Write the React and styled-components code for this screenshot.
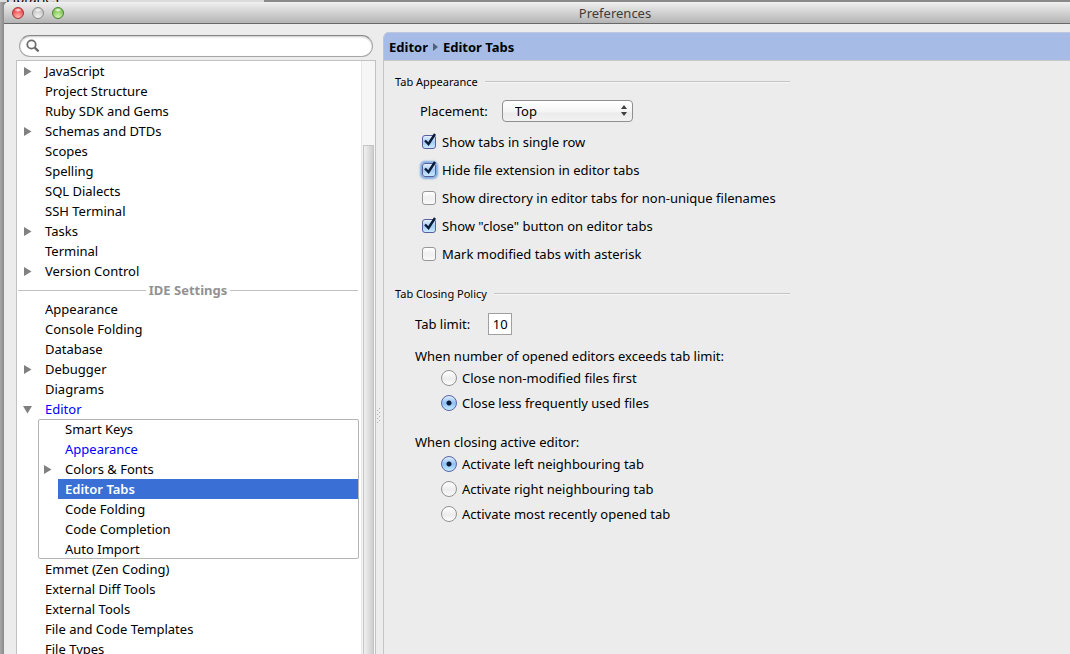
import React from "react";
import styled, { createGlobalStyle, css } from "styled-components";

const GlobalStyle = createGlobalStyle`
  * { box-sizing: border-box; }
  body {
    margin: 0;
    background: #a9a9a9;
    font-family: "Noto Sans", "Open Sans", sans-serif;
    font-size: 13px;
    line-height: 20px;
    color: #000;
  }
  input, select, button { font: inherit; color: inherit; margin: 0; padding: 0; }
`;

const Desktop = styled.div`
  height: 100vh;
  display: flex;
  flex-direction: column;
  overflow: hidden;
  background: linear-gradient(to right, #a8a8a8, #8a8a8a 4px);
`;

const BackWindow = styled.div`
  flex: none;
  display: flex;
  align-items: flex-end;
  width: 265px;
  height: 2px;
  padding-left: 6px;
  background: #dcdcdc;
  border-right: 1px solid #888;
  line-height: 8px;
  overflow: hidden;
`;

const Window = styled.main`
  flex: 1;
  min-height: 0;
  margin-left: 4px;
  display: flex;
  flex-direction: column;
  background: #ececec;
  border-top-left-radius: 5px;
  overflow: hidden;
`;

const TitleBar = styled.header`
  flex: none;
  height: 22px;
  display: grid;
  grid-template-columns: 252px 1fr 96px;
  align-items: center;
  background: linear-gradient(#f0f0f0, #d8d8d8 40%, #b4b4b4);
  border-bottom: 1px solid #686868;
`;

const Lights = styled.div`
  display: flex;
  gap: 8px;
  padding-left: 8px;
`;

const tones = {
  red: ["#ffb9b4", "#ee4a4c", "#a33432"],
  grey: ["#f4f4f4", "#c6c6c6", "#8c8c8c"],
  green: ["#d6f5b4", "#7dc552", "#4b8233"],
};

const Light = styled.button`
  width: 12px;
  height: 12px;
  border-radius: 50%;
  border: 1px solid ${(p) => tones[p.$tone][2]};
  background:
    radial-gradient(ellipse 4px 2px at 50% 20%, #fff, transparent),
    radial-gradient(circle at 50% 90%, ${(p) => tones[p.$tone][0]}, ${(p) => tones[p.$tone][1]} 70%);
`;

const Title = styled.h1`
  margin: 0;
  font-size: 13px;
  line-height: 20px;
  font-weight: 400;
  text-align: center;
  color: #3c3c3c;
`;

const Columns = styled.div`
  flex: 1;
  min-height: 0;
  display: flex;
`;

const Sidebar = styled.aside`
  flex: 0 0 360px;
  margin-left: 12px;
  padding-top: 11px;
  display: flex;
  flex-direction: column;
  gap: 3px;
`;

const SearchBox = styled.label`
  flex: none;
  display: flex;
  align-items: center;
  gap: 4px;
  height: 22px;
  margin: 0 3px;
  padding: 0 6px;
  border: 1px solid #a6a6a6;
  border-top-color: #858585;
  border-radius: 11px;
  background: #fff;
  box-shadow: inset 0 1px 2px #c8c8c8;
`;

const SearchInput = styled.input`
  flex: 1;
  min-width: 0;
  border: 0;
  outline: 0;
  background: transparent;
`;

const TreeFrame = styled.div`
  flex: 1;
  min-height: 0;
  display: flex;
  background: #fff;
  border: 1px solid #c2c2c2;
  border-bottom: 0;
`;

const Tree = styled.nav`
  flex: 1;
  min-width: 0;
  padding-right: 2px;
  overflow: hidden;
`;

const Track = styled.div`
  flex: none;
  width: 14px;
  padding: 84px 1px 0 1px;
  background: #f6f6f6;
  border-left: 1px solid #e6e6e6;
  display: flex;
`;

const Thumb = styled.div`
  flex: 1;
  border: 1px solid #c4c4c4;
  border-bottom: 0;
  background: linear-gradient(to right, #f0f0f0, #cecece);
`;

const Row = styled.a`
  display: flex;
  align-items: center;
  height: 20px;
  padding-left: 6px;
  color: ${(p) => (p.$changed ? "#00f" : "#000")};
  text-decoration: none;
  white-space: nowrap;
  ${(p) =>
    p.$selected &&
    css`
      margin-left: 19px;
      padding-left: 7px;
      background: #3a70d6;
      color: #fff;
      font-weight: 600;
    `}
`;

const Arrow = styled.svg`
  flex: none;
  width: 9px;
  height: 9px;
  margin-right: 13px;
  fill: #808080;
`;

const ArrowSpace = styled.span`
  flex: none;
  width: 22px;
`;

const Group = styled.div`
  margin: 0 0 0 21px;
  border: 1px solid #b4b4b4;
  border-radius: 2px;
  & > a:first-child { margin-top: -1px; }
  & > a:last-child { margin-bottom: -1px; }
`;

const SubRow = styled(Row)`
  padding-left: ${(p) => (p.$selected ? 7 : 4)}px;
`;

const Divider = styled.h2`
  display: flex;
  align-items: center;
  gap: 3px;
  height: 18px;
  margin: 0 1px;
  font-size: 13px;
  line-height: 18px;
  font-weight: 700;
  color: #929292;
  &::before, &::after { content: ""; flex: 1; border-top: 1px solid #c0c0c0; }
`;

const Splitter = styled.div`
  flex: 0 0 7px;
  display: flex;
  align-items: center;
  justify-content: flex-start;
  padding: 154px 0 0 1px;
`;

const Panel = styled.section`
  flex: 1;
  min-width: 0;
  margin-top: 8px;
  border-left: 1px solid #c4c4c4;
  border-top-left-radius: 6px;
  overflow: hidden;
`;

const Crumbs = styled.h2`
  display: flex;
  align-items: center;
  gap: 5px;
  height: 29px;
  margin: 0;
  padding-left: 5px;
  background: #a6bce6;
  border-top: 1px solid #bcc8e0;
  border-bottom: 1px solid #c8c8c8;
  font-size: 13px;
  line-height: 20px;
  font-weight: 700;
`;

const Form = styled.form`
  width: 406px;
  max-width: 100%;
  padding: 12px 0 0 11px;
`;

const Section = styled.fieldset`
  min-width: 0;
  margin: 0 0 17px;
  padding: 0;
  border: 0;
`;

const Legend = styled.legend`
  display: flex;
  align-items: center;
  gap: 7px;
  width: 100%;
  height: 18px;
  padding: 0;
  font-size: 11px;
  line-height: 18px;
  &::after { content: ""; flex: 1; border-top: 1px solid #c4c4c4; border-bottom: 1px solid #f6f6f6; }
`;

const Field = styled.label`
  display: flex;
  align-items: center;
  gap: ${(p) => (p.$narrow ? 18 : 14)}px;
  height: 22px;
  margin: ${(p) => (p.$narrow ? "10px 0 12px 20px" : "9px 0 6px 25px")};
`;

const SelectWrap = styled.span`
  position: relative;
  display: flex;
  width: 131px;
`;

const Select = styled.select`
  appearance: none;
  width: 100%;
  height: 22px;
  padding: 0 20px 2px 12px;
  border: 1px solid #8f8f8f;
  border-radius: 4px;
  background: linear-gradient(#fff, #f4f4f4 55%, #ebebeb 60%, #f2f2f2);
`;

const SelectArrows = styled.svg`
  position: absolute;
  right: 6px;
  top: 5px;
  fill: #404040;
  pointer-events: none;
`;

const LimitInput = styled.input`
  width: 24px;
  height: 22px;
  border: 1px solid #a0a0a0;
  border-radius: 0;
  background: #fff;
  text-align: center;
`;

const Option = styled.label`
  display: flex;
  align-items: center;
  gap: ${(p) => (p.$radio ? 5 : 6)}px;
  height: ${(p) => (p.$radio ? 25 : 28)}px;
  padding-left: ${(p) => (p.$radio ? 46 : 27)}px;
  white-space: nowrap;
`;

const Mark = styled.span`
  position: relative;
  flex: none;
  display: flex;
`;

const Check = styled.input`
  appearance: none;
  width: 14px;
  height: 14px;
  border: 1px solid #979797;
  border-radius: 3px;
  outline: 0;
  background: linear-gradient(#fff, #f0f0f0 50%, #fafafa);
  &:checked {
    border-color: #5a5f9c;
    background: linear-gradient(#e6f0fc, #a3ccf5 50%, #c9eaff);
  }
  ${(p) => p.$glow && css`box-shadow: 0 0 2px 2px #7eabdf;`}
`;

const Tick = styled.svg`
  position: absolute;
  left: 1px;
  top: -2px;
  fill: none;
  stroke: #0b1c38;
  stroke-width: 2.4;
  pointer-events: none;
`;

const Radio = styled.input`
  appearance: none;
  width: 16px;
  height: 16px;
  border: 1px solid #929292;
  border-radius: 50%;
  background: linear-gradient(#fff, #ececec 55%, #fdfdfd);
  &:checked {
    border-color: #5a66a6;
    background:
      radial-gradient(circle at 50% 50%, #0b1c38 2px, transparent 3px),
      linear-gradient(#e0edfc, #8fc1f5 50%, #c4ebff);
  }
`;

const Question = styled.p`
  margin: ${(p) => (p.$spaced ? "18px 0 0 20px" : "0 0 0 20px")};
  line-height: 18px;
`;

function TreeRow({ label, open, branch, sub, ...rest }) {
  const Item = sub ? SubRow : Row;
  return (
    <Item href="#" {...rest}>
      {branch ? (
        <Arrow viewBox="0 0 9 9" aria-hidden="true">
          <path d={open ? "M0 1H9L4.5 8.5Z" : "M1 0L8.5 4.5L1 9Z"} />
        </Arrow>
      ) : (
        !rest.$selected && <ArrowSpace />
      )}
      {label}
    </Item>
  );
}

function CheckOption({ label, checked, focused }) {
  return (
    <Option>
      <Mark>
        <Check type="checkbox" defaultChecked={checked} $glow={focused} />
        {checked && (
          <Tick width="14" height="14" viewBox="0 0 14 14" aria-hidden="true">
            <path d="M2 7.5L5.5 11L12 1" />
          </Tick>
        )}
      </Mark>
      {label}
    </Option>
  );
}

function RadioOption({ label, name, checked }) {
  return (
    <Option $radio>
      <Radio type="radio" name={name} defaultChecked={checked} />
      {label}
    </Option>
  );
}

const projectRows = [
  ["JavaScript", true], ["Project Structure"], ["Ruby SDK and Gems"],
  ["Schemas and DTDs", true], ["Scopes"], ["Spelling"], ["SQL Dialects"],
  ["SSH Terminal"], ["Tasks", true], ["Terminal"], ["Version Control", true],
];
const ideRows = [["Appearance"], ["Console Folding"], ["Database"], ["Debugger", true], ["Diagrams"]];
const toolRows = ["Emmet (Zen Coding)", "External Diff Tools", "External Tools", "File and Code Templates", "File Types"];

const gripDots = [0, 1, 2, 3, 4, 5, 6, 7];

export default function App() {
  return (
    <>
      <GlobalStyle />
      <Desktop>
        <BackWindow>Libraries</BackWindow>
        <Window>
          <TitleBar>
            <Lights>
              <Light type="button" aria-label="Close" $tone="red" />
              <Light type="button" aria-label="Minimize" $tone="grey" />
              <Light type="button" aria-label="Zoom" $tone="green" />
            </Lights>
            <Title>Preferences</Title>
          </TitleBar>
          <Columns>
            <Sidebar>
              <SearchBox>
                <svg width="14" height="14" viewBox="0 0 14 14" fill="none" stroke="#6c6c6c" aria-hidden="true">
                  <circle cx="5.5" cy="5.5" r="4.2" strokeWidth="1.8" />
                  <path d="M8.7 8.7L12.6 12.4" strokeWidth="2.3" />
                </svg>
                <SearchInput type="search" aria-label="Search settings" />
              </SearchBox>
              <TreeFrame>
                <Tree aria-label="Settings">
                  {projectRows.map(([label, branch]) => (
                    <TreeRow key={label} label={label} branch={branch} />
                  ))}
                  <Divider>IDE Settings</Divider>
                  {ideRows.map(([label, branch]) => (
                    <TreeRow key={label} label={label} branch={branch} />
                  ))}
                  <TreeRow label="Editor" branch open $changed />
                  <Group>
                    <TreeRow sub label="Smart Keys" />
                    <TreeRow sub label="Appearance" $changed />
                    <TreeRow sub label="Colors & Fonts" branch />
                    <TreeRow sub label="Editor Tabs" $selected />
                    <TreeRow sub label="Code Folding" />
                    <TreeRow sub label="Code Completion" />
                    <TreeRow sub label="Auto Import" />
                  </Group>
                  {toolRows.map((label) => (
                    <TreeRow key={label} label={label} />
                  ))}
                </Tree>
                <Track>
                  <Thumb />
                </Track>
              </TreeFrame>
            </Sidebar>
            <Splitter>
              <svg width="4" height="16" viewBox="0 0 4 16" fill="#b0b0b0" aria-hidden="true">
                {gripDots.map((i) => (
                  <rect key={i} x={i % 2 ? 0 : 2} y={i * 2} width="1" height="1" />
                ))}
              </svg>
            </Splitter>
            <Panel>
              <Crumbs>
                Editor
                <svg width="5" height="8" viewBox="0 0 5 8" fill="#50607c" aria-hidden="true">
                  <path d="M0 0L5 4L0 8Z" />
                </svg>
                Editor Tabs
              </Crumbs>
              <Form>
                <Section>
                  <Legend>Tab Appearance</Legend>
                  <Field>
                    Placement:
                    <SelectWrap>
                      <Select defaultValue="Top">
                        <option>Top</option>
                        <option>Bottom</option>
                        <option>Left</option>
                        <option>Right</option>
                      </Select>
                      <SelectArrows width="6" height="11" viewBox="0 0 6 11" aria-hidden="true">
                        <path d="M0 4L3 0L6 4ZM0 7H6L3 11Z" />
                      </SelectArrows>
                    </SelectWrap>
                  </Field>
                  <CheckOption label="Show tabs in single row" checked />
                  <CheckOption label="Hide file extension in editor tabs" checked focused />
                  <CheckOption label="Show directory in editor tabs for non-unique filenames" />
                  <CheckOption label={'Show "close" button on editor tabs'} checked />
                  <CheckOption label="Mark modified tabs with asterisk" />
                </Section>
                <Section>
                  <Legend>Tab Closing Policy</Legend>
                  <Field $narrow>
                    Tab limit:
                    <LimitInput type="text" defaultValue="10" />
                  </Field>
                  <Question>When number of opened editors exceeds tab limit:</Question>
                  <RadioOption name="overflow" label="Close non-modified files first" />
                  <RadioOption name="overflow" label="Close less frequently used files" checked />
                  <Question $spaced>When closing active editor:</Question>
                  <RadioOption name="activate" label="Activate left neighbouring tab" checked />
                  <RadioOption name="activate" label="Activate right neighbouring tab" />
                  <RadioOption name="activate" label="Activate most recently opened tab" />
                </Section>
              </Form>
            </Panel>
          </Columns>
        </Window>
      </Desktop>
    </>
  );
}
